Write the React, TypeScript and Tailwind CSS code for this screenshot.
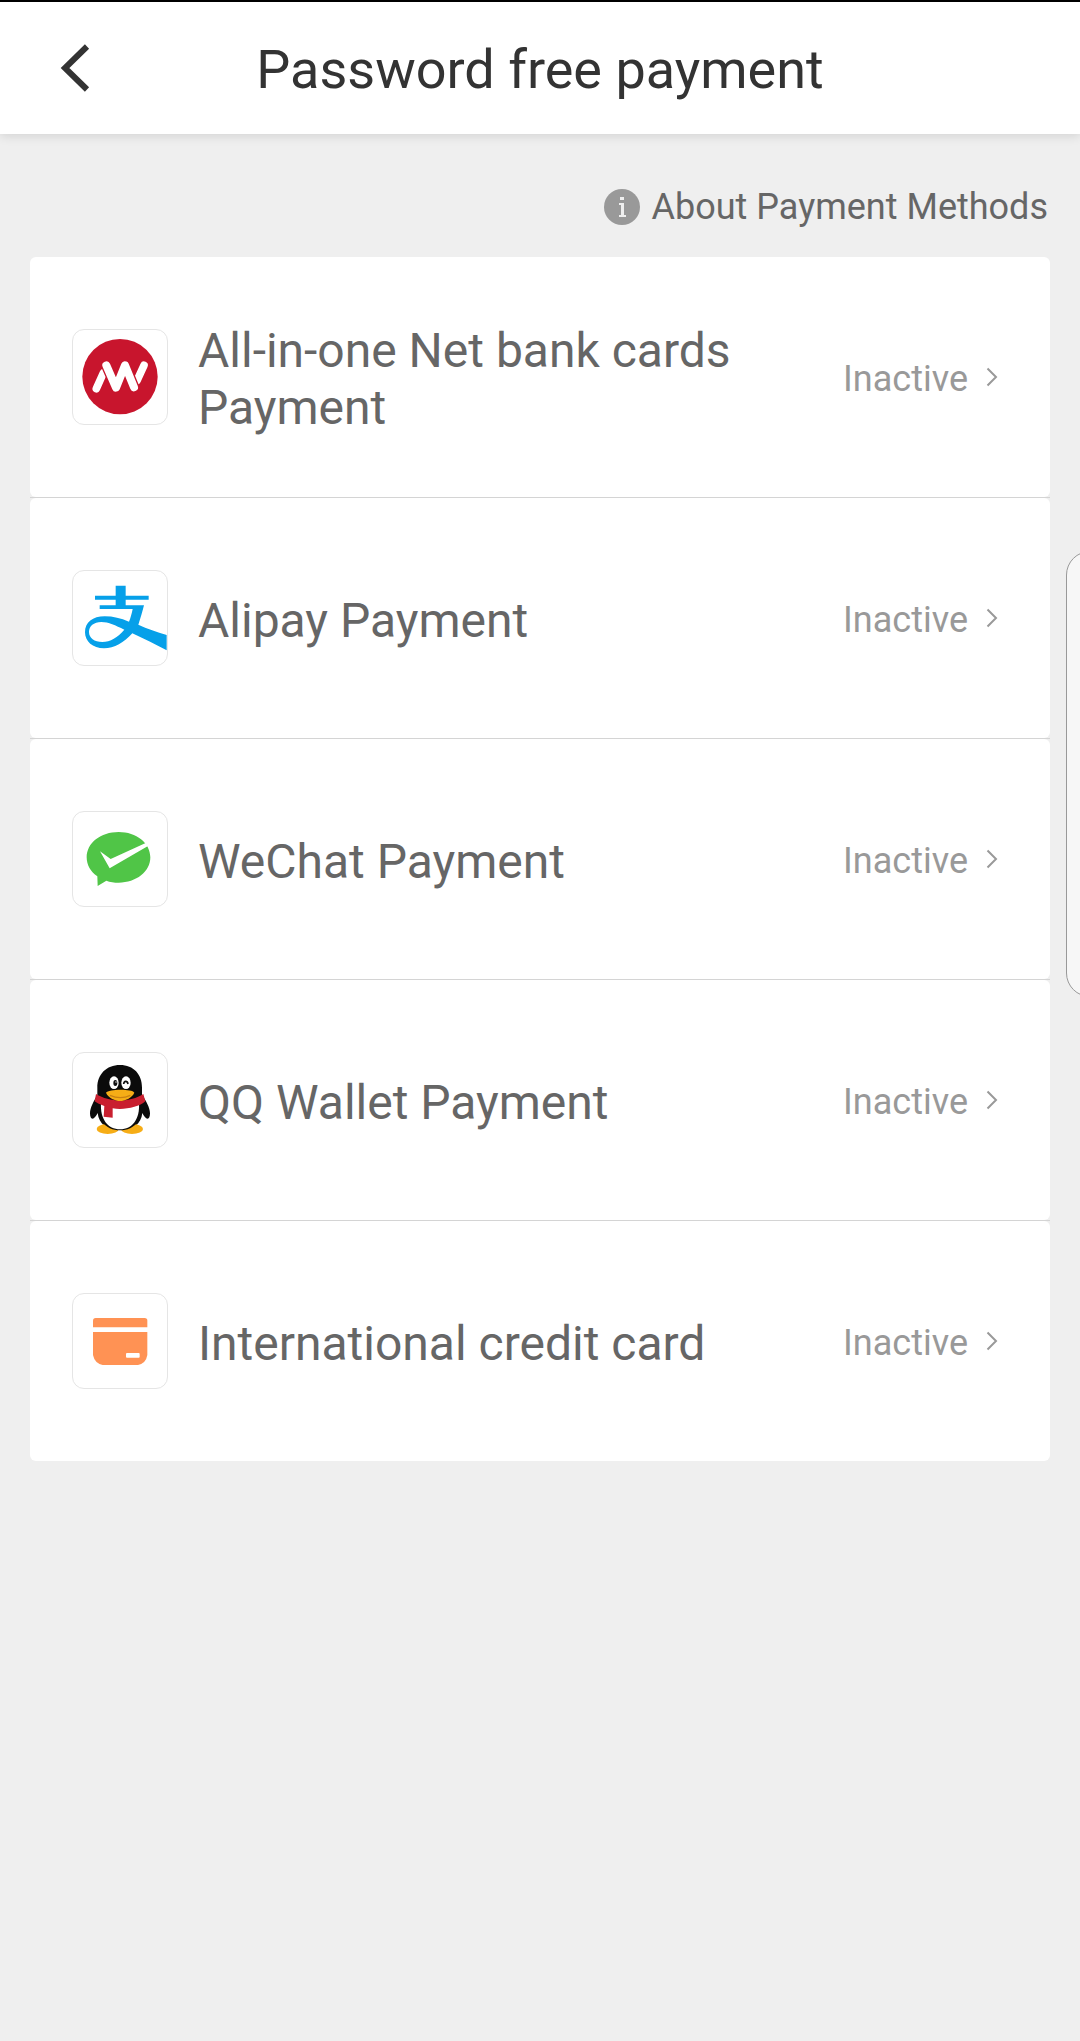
import type { ReactNode } from 'react';

const NetBankLogo = () => (
  <svg viewBox="39 45 282 282" className="h-full w-full" aria-hidden="true">
    <circle cx="180" cy="185" r="113" fill="#c8152d" />
    <g fill="none" stroke="#fff" strokeWidth="23" strokeLinecap="round" strokeLinejoin="round">
      <path d="M109 221L130 174" />
      <path d="M252 151L231 197" />
    </g>
    <path d="M139 151L168 218L195 151L222 217" fill="none" stroke="#c8152d" strokeWidth="32" strokeLinecap="round" strokeLinejoin="round" />
    <path d="M139 151L168 218L195 151L222 217" fill="none" stroke="#fff" strokeWidth="24" strokeLinecap="round" strokeLinejoin="round" />
  </svg>
);

const AlipayLogo = () => (
  <svg viewBox="39 33 282 282" className="h-full w-full" aria-hidden="true">
    <path
      fill="#06a0e9"
      fillRule="evenodd"
      d="M167 77H197V107H266V119H197V136H252C247 156 242 172 235 194C262 206 290 216 320 225V271C286 253 252 236 217 220C192 248 163 265 132 265C98 265 75 244 75 217C75 187 98 169 134 169C160 169 182 175 207 185C212 173 215 161 218 147H119V136H167V119H105V107H167ZM193 209C166 196 146 186 124 186C101 186 87 199 87 216C87 234 103 246 127 246C151 246 173 232 193 209Z"
    />
  </svg>
);

const WeChatLogo = () => (
  <svg viewBox="39 36 282 282" className="h-full w-full" aria-hidden="true">
    <path
      fill="#50c547"
      d="M176 96C229 96 271 129 271 172C271 215 229 248 176 248C163 248 150 246 139 242L113 258L112 229C92 215 80 195 80 172C80 129 122 96 176 96Z"
    />
    <path fill="#fff" d="M120 154L152 177L257 129L264 138L149 205Z" />
  </svg>
);

const QQLogo = () => (
  <svg viewBox="39 39 282 282" className="h-full w-full" aria-hidden="true">
    <path
      fill="#0b0b0b"
      d="M180 75C221 75 246 103 246 143V165C257 181 270 202 270 220C270 230 267 236 263 236C257 236 251 227 247 219C243 252 220 270 180 270C140 270 117 252 113 219C109 227 103 236 97 236C93 236 90 230 90 220C90 202 103 181 112 165V143C112 103 139 75 180 75Z"
    />
    <ellipse cx="143" cy="267" rx="33" ry="15" fill="#f6ad16" />
    <ellipse cx="216" cy="267" rx="33" ry="15" fill="#f6ad16" />
    <path fill="#0b0b0b" d="M122 240C138 264 160 271 180 271C200 271 222 264 238 240Z" />
    <path fill="#fff" d="M123 190C120 237 143 268 180 268C217 268 240 237 237 190Z" />
    <path fill="#c91f2f" d="M108 162C150 188 210 188 250 162L256 184C237 202 190 211 158 205V233L131 230L133 198C120 194 111 189 104 184Z" />
    <ellipse cx="162" cy="128" rx="14" ry="19" fill="#fff" />
    <ellipse cx="198" cy="128" rx="14" ry="19" fill="#fff" />
    <ellipse cx="166" cy="129" rx="6" ry="9" fill="#111" />
    <circle cx="168" cy="126" r="2" fill="#fff" />
    <path d="M191 132C192 122 202 121 204 132" fill="none" stroke="#111" strokeWidth="5" />
    <path fill="#f6ad16" d="M138 158C145 147 216 146 223 158C216 174 194 183 180 183C166 183 145 174 138 158Z" />
    <path d="M150 166C170 175 192 175 211 166" fill="none" stroke="#c98112" strokeWidth="4" />
  </svg>
);

const CreditCardLogo = () => (
  <svg viewBox="39 42 282 282" className="h-full w-full" aria-hidden="true">
    <path fill="#ff9254" d="M99 142V122Q99 114 107 114H254Q262 114 262 122V142Z" />
    <path fill="#ff9254" d="M99 156H262V225Q258 250 234 255H128Q104 250 99 225Z" />
    <rect x="198" y="219" width="41" height="14" rx="3" fill="#fff" />
  </svg>
);

const methods: { name: string; status: string; logo: ReactNode }[] = [
  { name: 'All-in-one Net bank cards Payment', status: 'Inactive', logo: <NetBankLogo /> },
  { name: 'Alipay Payment', status: 'Inactive', logo: <AlipayLogo /> },
  { name: 'WeChat Payment', status: 'Inactive', logo: <WeChatLogo /> },
  { name: 'QQ Wallet Payment', status: 'Inactive', logo: <QQLogo /> },
  { name: 'International credit card', status: 'Inactive', logo: <CreditCardLogo /> },
];

const App = () => {
  return (
    <div className="relative min-h-screen overflow-hidden bg-[#efefef] font-[Roboto,sans-serif]">
      <header className="grid grid-cols-[60px_1fr_60px] items-center border-t-2 border-black bg-white px-11 py-[26px] shadow-[0_2px_10px_rgba(0,0,0,0.12)]">
        <button type="button" aria-label="Back" className="flex h-16 items-center pl-4">
          <svg viewBox="0 0 30 48" className="h-12 w-[30px]" fill="none" stroke="#333" strokeWidth="6">
            <path d="M27 2.500L5 24L27 45.500" />
          </svg>
        </button>
        <h1 className="pt-1 text-center text-[54px] leading-[76px] text-[#333]">Password free payment</h1>
      </header>

      <main className="px-[30px]">
        <div className="flex justify-end pt-12 pb-[26px]">
          <a href="#about" className="flex items-center gap-3 text-[36px] leading-[47px] text-[#666]">
            <svg viewBox="0 0 36 36" className="size-9" aria-hidden="true">
              <circle cx="18" cy="18" r="18" fill="#999" />
              <path d="M16 8h4v3h-4zM15 14h5v12h2v2h-7v-2h2V16h-2z" fill="#efefef" />
            </svg>
            <span className="pt-0.5 pr-0.5">About Payment Methods</span>
          </a>
        </div>

        <ul>
          {methods.map((method) => (
            <li key={method.name} className="border-b border-[#d4d4d4] last:border-b-0">
              <button
                type="button"
                className="flex min-h-60 w-full items-center rounded-md bg-white pr-[52px] pl-[42px] text-left"
              >
                <span className="size-24 shrink-0 overflow-hidden rounded-xl border border-[#e5e5e5]">
                  {method.logo}
                </span>
                <span className="ml-[30px] flex-1 pt-1 text-[48px] leading-[57px] text-[#666]">{method.name}</span>
                <span className="ml-20 pt-1 text-[36px] leading-[48px] text-[#999]">{method.status}</span>
                <svg viewBox="0 0 12 20" className="ml-[18px] h-5 w-3" fill="none" stroke="#999" strokeWidth="2" aria-hidden="true">
                  <path d="M1.500 1.500L10 10L1.500 18.500" />
                </svg>
              </button>
            </li>
          ))}
        </ul>
      </main>

      {/* Edge panel handle */}
      <div className="absolute top-[551px] -right-6 h-[446px] w-[38px] rounded-l-[24px] border border-[#999] bg-[#f7f7f7]" />
    </div>
  );
};

export default App;
